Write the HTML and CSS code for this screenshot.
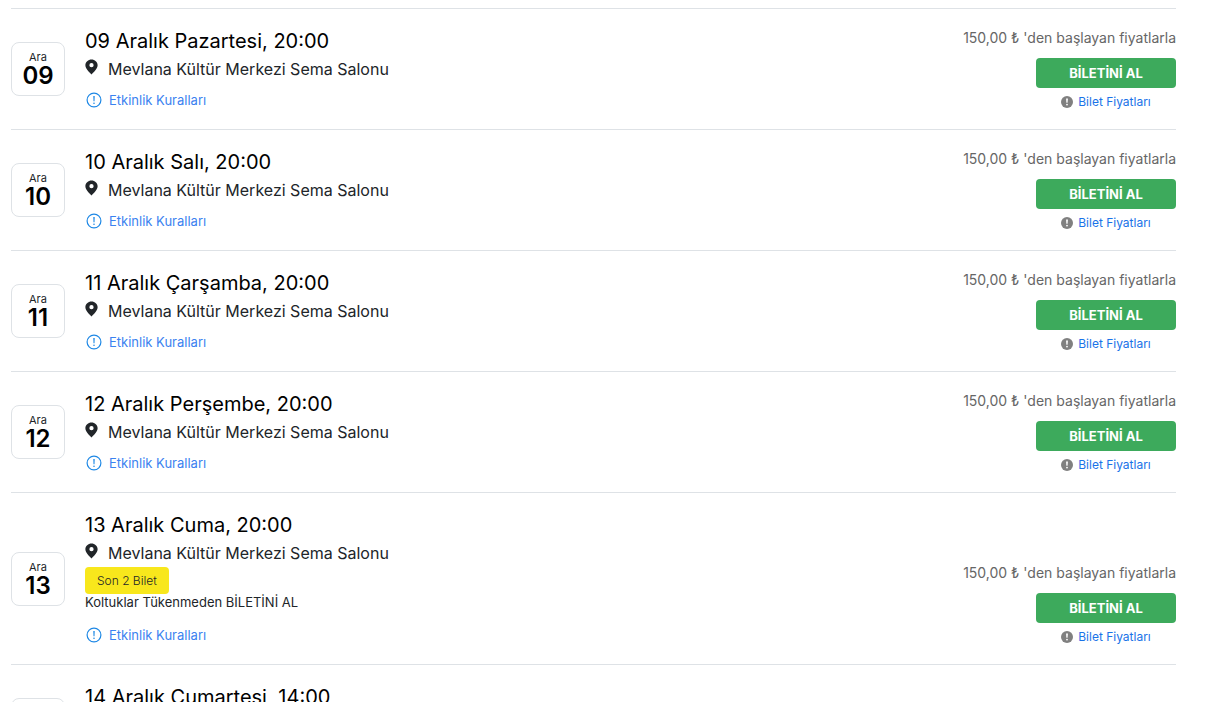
FILE: index.html
```html
<!DOCTYPE html>
<html lang="tr">
<head>
  <meta charset="UTF-8">
  <title>Etkinlik Takvimi</title>
  <meta name="viewport" content="width=device-width, initial-scale=1.0">
  <link rel="stylesheet" href="styles.css">
</head>
<body>

  <!-- Icons shared by all rows -->
  <svg class="sprite" aria-hidden="true">
    <symbol id="pin" viewBox="0 0 14 18">
      <path fill-rule="evenodd" d="M7 1C3.500 1 .4 3.700 .4 7.200C.4 11 4.600 14.500 7 17C9.400 14.500 13.600 11 13.600 7.200C13.600 3.700 10.500 1 7 1ZM7 4.800A2.300 2.300 0 1 1 7 9.400A2.300 2.300 0 1 1 7 4.800Z"/>
    </symbol>
    <symbol id="rules" viewBox="0 0 16 16">
      <circle cx="8" cy="8" r="6.900" fill="none" stroke="currentColor" stroke-width="1.200"/>
      <path d="M7.300 4h1.400l-.2 5.200h-1z"/>
      <circle cx="8" cy="11.200" r=".8"/>
    </symbol>
    <symbol id="info" viewBox="0 0 12 12">
      <circle cx="6" cy="6" r="6"/>
      <path fill="#fff" d="M5.100 2.500h1.800l-.3 4.200h-1.200z"/>
      <circle cx="6" cy="8.600" r=".9" fill="#fff"/>
    </symbol>
  </svg>

  <main class="events">
    <article class="event">
      <div class="date"><span class="month">Ara</span><span class="day">09</span></div>
      <div class="info">
        <h2>09 Aralık Pazartesi, 20:00</h2>
        <p class="venue"><svg class="pin"><use href="#pin"/></svg>Mevlana Kültür Merkezi Sema Salonu</p>
        <a class="rules" href="#"><svg><use href="#rules"/></svg>Etkinlik Kuralları</a>
      </div>
      <div class="ticket">
        <p class="price">150,00 ₺ 'den başlayan fiyatlarla</p>
        <button class="buy" type="button">BİLETİNİ AL</button>
        <a class="prices" href="#"><svg><use href="#info"/></svg>Bilet Fiyatları</a>
      </div>
    </article>

    <article class="event">
      <div class="date"><span class="month">Ara</span><span class="day">10</span></div>
      <div class="info">
        <h2>10 Aralık Salı, 20:00</h2>
        <p class="venue"><svg class="pin"><use href="#pin"/></svg>Mevlana Kültür Merkezi Sema Salonu</p>
        <a class="rules" href="#"><svg><use href="#rules"/></svg>Etkinlik Kuralları</a>
      </div>
      <div class="ticket">
        <p class="price">150,00 ₺ 'den başlayan fiyatlarla</p>
        <button class="buy" type="button">BİLETİNİ AL</button>
        <a class="prices" href="#"><svg><use href="#info"/></svg>Bilet Fiyatları</a>
      </div>
    </article>

    <article class="event">
      <div class="date"><span class="month">Ara</span><span class="day">11</span></div>
      <div class="info">
        <h2>11 Aralık Çarşamba, 20:00</h2>
        <p class="venue"><svg class="pin"><use href="#pin"/></svg>Mevlana Kültür Merkezi Sema Salonu</p>
        <a class="rules" href="#"><svg><use href="#rules"/></svg>Etkinlik Kuralları</a>
      </div>
      <div class="ticket">
        <p class="price">150,00 ₺ 'den başlayan fiyatlarla</p>
        <button class="buy" type="button">BİLETİNİ AL</button>
        <a class="prices" href="#"><svg><use href="#info"/></svg>Bilet Fiyatları</a>
      </div>
    </article>

    <article class="event">
      <div class="date"><span class="month">Ara</span><span class="day">12</span></div>
      <div class="info">
        <h2>12 Aralık Perşembe, 20:00</h2>
        <p class="venue"><svg class="pin"><use href="#pin"/></svg>Mevlana Kültür Merkezi Sema Salonu</p>
        <a class="rules" href="#"><svg><use href="#rules"/></svg>Etkinlik Kuralları</a>
      </div>
      <div class="ticket">
        <p class="price">150,00 ₺ 'den başlayan fiyatlarla</p>
        <button class="buy" type="button">BİLETİNİ AL</button>
        <a class="prices" href="#"><svg><use href="#info"/></svg>Bilet Fiyatları</a>
      </div>
    </article>

    <article class="event">
      <div class="date"><span class="month">Ara</span><span class="day">13</span></div>
      <div class="info">
        <h2>13 Aralık Cuma, 20:00</h2>
        <p class="venue"><svg class="pin"><use href="#pin"/></svg>Mevlana Kültür Merkezi Sema Salonu</p>
        <div class="last">
          <span class="badge">Son 2 Bilet</span>
          <p class="hurry">Koltuklar Tükenmeden BİLETİNİ AL</p>
        </div>
        <a class="rules" href="#"><svg><use href="#rules"/></svg>Etkinlik Kuralları</a>
      </div>
      <div class="ticket">
        <p class="price">150,00 ₺ 'den başlayan fiyatlarla</p>
        <button class="buy" type="button">BİLETİNİ AL</button>
        <a class="prices" href="#"><svg><use href="#info"/></svg>Bilet Fiyatları</a>
      </div>
    </article>

    <article class="event">
      <div class="date"><span class="month">Ara</span><span class="day">14</span></div>
      <div class="info">
        <h2>14 Aralık Cumartesi, 14:00</h2>
        <p class="venue"><svg class="pin"><use href="#pin"/></svg>Mevlana Kültür Merkezi Sema Salonu</p>
        <a class="rules" href="#"><svg><use href="#rules"/></svg>Etkinlik Kuralları</a>
      </div>
    </article>
  </main>

</body>
</html>
```
FILE: styles.css
```css
* {
  box-sizing: border-box;
}
body {
  margin: 0;
  background: #fff;
  color: #212529;
  font-family: Inter, 'Liberation Sans', sans-serif;
}
h2, p {
  margin: 0;
}
a {
  text-decoration: none;
}
svg {
  fill: currentColor;
  flex: none;
}
.sprite {
  display: none;
}
.events {
  padding: 8px 35px 0 11px;
}
.event {
  display: flex;
  align-items: center;
  gap: 20px;
  padding: 19px 0 17px;
  border-top: 1px solid #dee2e6;
}
.date {
  display: flex;
  flex-direction: column;
  align-items: center;
  flex: none;
  width: 54px;
  height: 54px;
  margin-bottom: 2px;
  padding-top: 8px;
  border: 1px solid #dee2e6;
  border-radius: 8px;
}
.month {
  font-size: 11px;
  line-height: 13px;
}
.day {
  color: #000;
  font-size: 24px;
  font-weight: 600;
  line-height: 24px;
}
.info {
  flex: 1;
  padding: 1px 0 2px;
}
.info h2 {
  color: #000;
  font-size: 20px;
  font-weight: 400;
  line-height: 24px;
}
.venue {
  display: flex;
  gap: 10px;
  margin-top: 4px;
  font-size: 16px;
  line-height: 24px;
}
.pin {
  width: 13px;
  height: 18px;
  margin-top: 1px;
}
.rules {
  display: flex;
  align-items: center;
  gap: 7px;
  width: fit-content;
  margin-top: 9px;
  padding-left: 1px;
  color: #3b82f0;
  font-size: 13px;
  line-height: 20px;
}
.rules svg {
  width: 16px;
  height: 16px;
  color: #1e88e5;
}
.last {
  margin: 2px 0 14px;
}
.badge {
  display: block;
  width: fit-content;
  padding: 0 12px;
  background: #f8e71c;
  border-radius: 4px;
  font-size: 12px;
  font-weight: 300;
  line-height: 27px;
}
.hurry {
  font-size: 13px;
  line-height: 17px;
}
.ticket {
  display: flex;
  flex-direction: column;
  align-items: flex-end;
  align-self: flex-end;
}
.price {
  color: #666;
  font-size: 14px;
  line-height: 20px;
}
.buy {
  width: 140px;
  height: 30px;
  margin: 10px 0 4px;
  border: 0;
  border-radius: 4px;
  background: #3daa5c;
  color: #fff;
  font-family: inherit;
  font-size: 13px;
  font-weight: 700;
  cursor: pointer;
}
.prices {
  display: flex;
  justify-content: center;
  align-items: center;
  gap: 5px;
  width: 140px;
  color: #1a73e8;
  font-size: 12px;
  line-height: 20px;
}
.prices svg {
  width: 12px;
  height: 12px;
  color: #808080;
}
```
